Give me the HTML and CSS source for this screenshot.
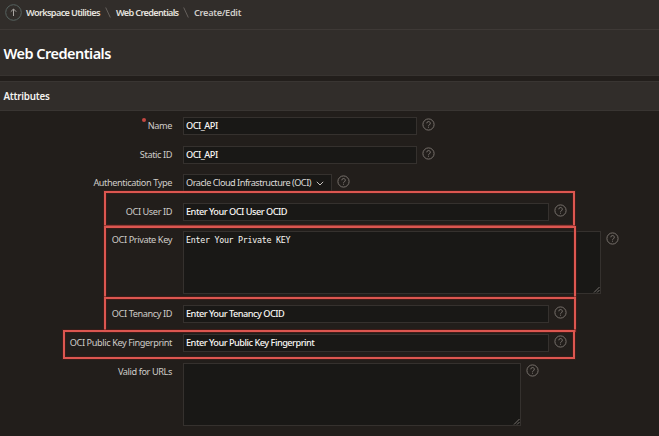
FILE: index.html
```html
<!DOCTYPE html>
<html lang="en">
<head>
<meta charset="utf-8">
<title>Web Credentials</title>
<link rel="stylesheet" href="styles.css">
</head>
<body>
<svg class="defs" width="0" height="0" aria-hidden="true">
  <symbol id="help" viewBox="0 0 13 13"><circle cx="6.5" cy="6.5" r="5.6"/><path d="M4.8 5.3a1.75 1.75 0 1 1 2.6 1.5q-.9.5-.9 1.1M6.5 8.7v1"/></symbol>
  <symbol id="grip" viewBox="0 0 7 7"><path d="M1 6.5 6.5 1M4 6.5 6.5 4"/></symbol>
</svg>
<nav class="crumbs">
  <svg class="up" viewBox="0 0 17 17"><circle cx="8.5" cy="8.5" r="7.8"/><path d="M8.5 12V5.2M5.8 7.7l2.7-2.7 2.7 2.7"/></svg>
  <a class="c1">Workspace Utilities</a>
  <svg class="slash" viewBox="0 0 6 11"><path d="M.7.5 5.3 10.5"/></svg>
  <a class="c2">Web Credentials</a>
  <svg class="slash" viewBox="0 0 6 11"><path d="M.7.5 5.3 10.5"/></svg>
  <a class="c3">Create/Edit</a>
</nav>
<header class="title"><h1>Web Credentials</h1></header>
<section>
  <h2>Attributes</h2>
  <div class="form">
    <div class="row"><label class="required">Name</label><div class="field mid">OCI_API</div><svg class="help"><use href="#help"/></svg></div>
    <div class="row"><label>Static ID</label><div class="field mid">OCI_API</div><svg class="help"><use href="#help"/></svg></div>
    <div class="row"><label>Authentication Type</label><div class="field select"><span>Oracle Cloud Infrastructure (OCI)</span><svg class="chev" viewBox="0 0 8 5"><path d="M.8.8 4 4 7.2.8"/></svg></div><svg class="help"><use href="#help"/></svg></div>
    <div class="row"><label>OCI User ID</label><div class="field wide">Enter Your OCI User OCID</div><svg class="help"><use href="#help"/></svg></div>
    <div class="row tall"><label>OCI Private Key</label><div class="field area mono">Enter Your Private KEY<svg class="grip"><use href="#grip"/></svg></div><svg class="help"><use href="#help"/></svg></div>
    <div class="row"><label>OCI Tenancy ID</label><div class="field wide">Enter Your Tenancy OCID</div><svg class="help"><use href="#help"/></svg></div>
    <div class="row"><label>OCI Public Key Fingerprint</label><div class="field wide">Enter Your Public Key Fingerprint</div><svg class="help"><use href="#help"/></svg></div>
    <div class="row tall"><label>Valid for URLs</label><div class="field area urls"><svg class="grip"><use href="#grip"/></svg></div><svg class="help"><use href="#help"/></svg></div>
  </div>
</section>
<div class="mark mark-user"></div>
<div class="mark mark-key"></div>
<div class="mark mark-tenancy"></div>
<div class="mark mark-finger"></div>
</body>
</html>
```

FILE: styles.css
```css
* { box-sizing: border-box; }
body {
  margin: 0; height: 436px; overflow: hidden; position: relative;
  background: #221e1b; color: #eeece9;
  font: 9.2px/14px "Noto Sans", "Open Sans", sans-serif;
}
svg { display: block; flex: none; fill: none; stroke: #77716c; stroke-width: 1; }
.defs { position: absolute; }
.crumbs {
  height: 30px; display: flex; align-items: center; padding: 0 0 4px 5px;
  background: #312d2a; border-bottom: 1px solid #3e3936;
  font-weight: 600; font-size: 9.2px; white-space: nowrap;
}
.up { width: 17px; height: 17px; margin: -1px 4px 0 0; stroke: #aaa6a2; }
.up circle { stroke: #56625f; }
.crumbs a { color: #e5e2df; flex: none; }
.c1 { width: 75px; letter-spacing: -.66px; }
.c2 { width: 63px; letter-spacing: -.7px; }
.crumbs .c3 { letter-spacing: -.3px; color: #cfccc8; }
.slash { width: 6px; height: 11px; margin: 0 5px 0 4px; stroke: #65605c; }
.title {
  height: 46px; padding: 13px 0 0 3.5px; background: #312d2a;
  border-bottom: 1px solid #373330;
}
h1 { margin: 0; font-size: 14.5px; line-height: 20px; font-weight: 600; letter-spacing: -.52px; color: #fff; }
h2 {
  margin: 5px 0 0; height: 30px; padding: 8px 0 0 3.5px;
  font-size: 9.8px; line-height: 14px; font-weight: 600; letter-spacing: -.25px;
  background: #312d2a; border-top: 1px solid #393532; border-bottom: 1px solid #393532;
  color: #f4f2ef;
}
.form { padding-top: 6px; }
.row { height: 28.6px; display: flex; align-items: flex-start; }
.tall { height: 74px; }
label {
  width: 172px; margin: 2px 11px 0 0; text-align: right; position: relative;
  color: #cfccc8; letter-spacing: -.41px; white-space: nowrap; flex: none;
}
.required::before {
  content: ""; position: absolute; left: 142px; top: -1px; width: 4px; height: 4px;
  border-radius: 50%; background: #c34742;
}
.field {
  height: 18px; padding: 1px 2px; border: 1px solid #35312e; background: #191816;
  color: #f8f6f3; font-weight: 500; letter-spacing: -.5px; white-space: nowrap; position: relative; flex: none;
}
.mid { width: 234px; }
.wide { width: 366px; }
.select { width: 149px; display: flex; align-items: center; justify-content: space-between; padding-right: 7px; font-weight: 400; letter-spacing: -.51px; color: #dedbd7; }
.chev { width: 8px; height: 5px; stroke: #c5c1bd; }
.area { width: 338px; height: 63px; }
.area.mono { width: 418px; font: 8.3px/14px "DejaVu Sans Mono", monospace; letter-spacing: -.26px; }
.help { width: 13px; height: 13px; margin: 1px 0 0 5px; }
.grip { position: absolute; right: 0; bottom: 0; width: 7px; height: 7px; stroke: #8b8681; stroke-width: .8; }
.mark { position: absolute; border: 2px solid #dc5650; box-shadow: 0 0 0 1px #491b1880, inset 0 0 0 1px #491b1880; }
.mark-user { left: 104px; top: 191px; width: 471px; height: 36px; }
.mark-key { left: 104px; top: 226px; width: 472px; height: 73px; }
.mark-tenancy { left: 104px; top: 297px; width: 472px; height: 35px; }
.mark-finger { left: 63px; top: 330px; width: 512px; height: 29px; }
```
